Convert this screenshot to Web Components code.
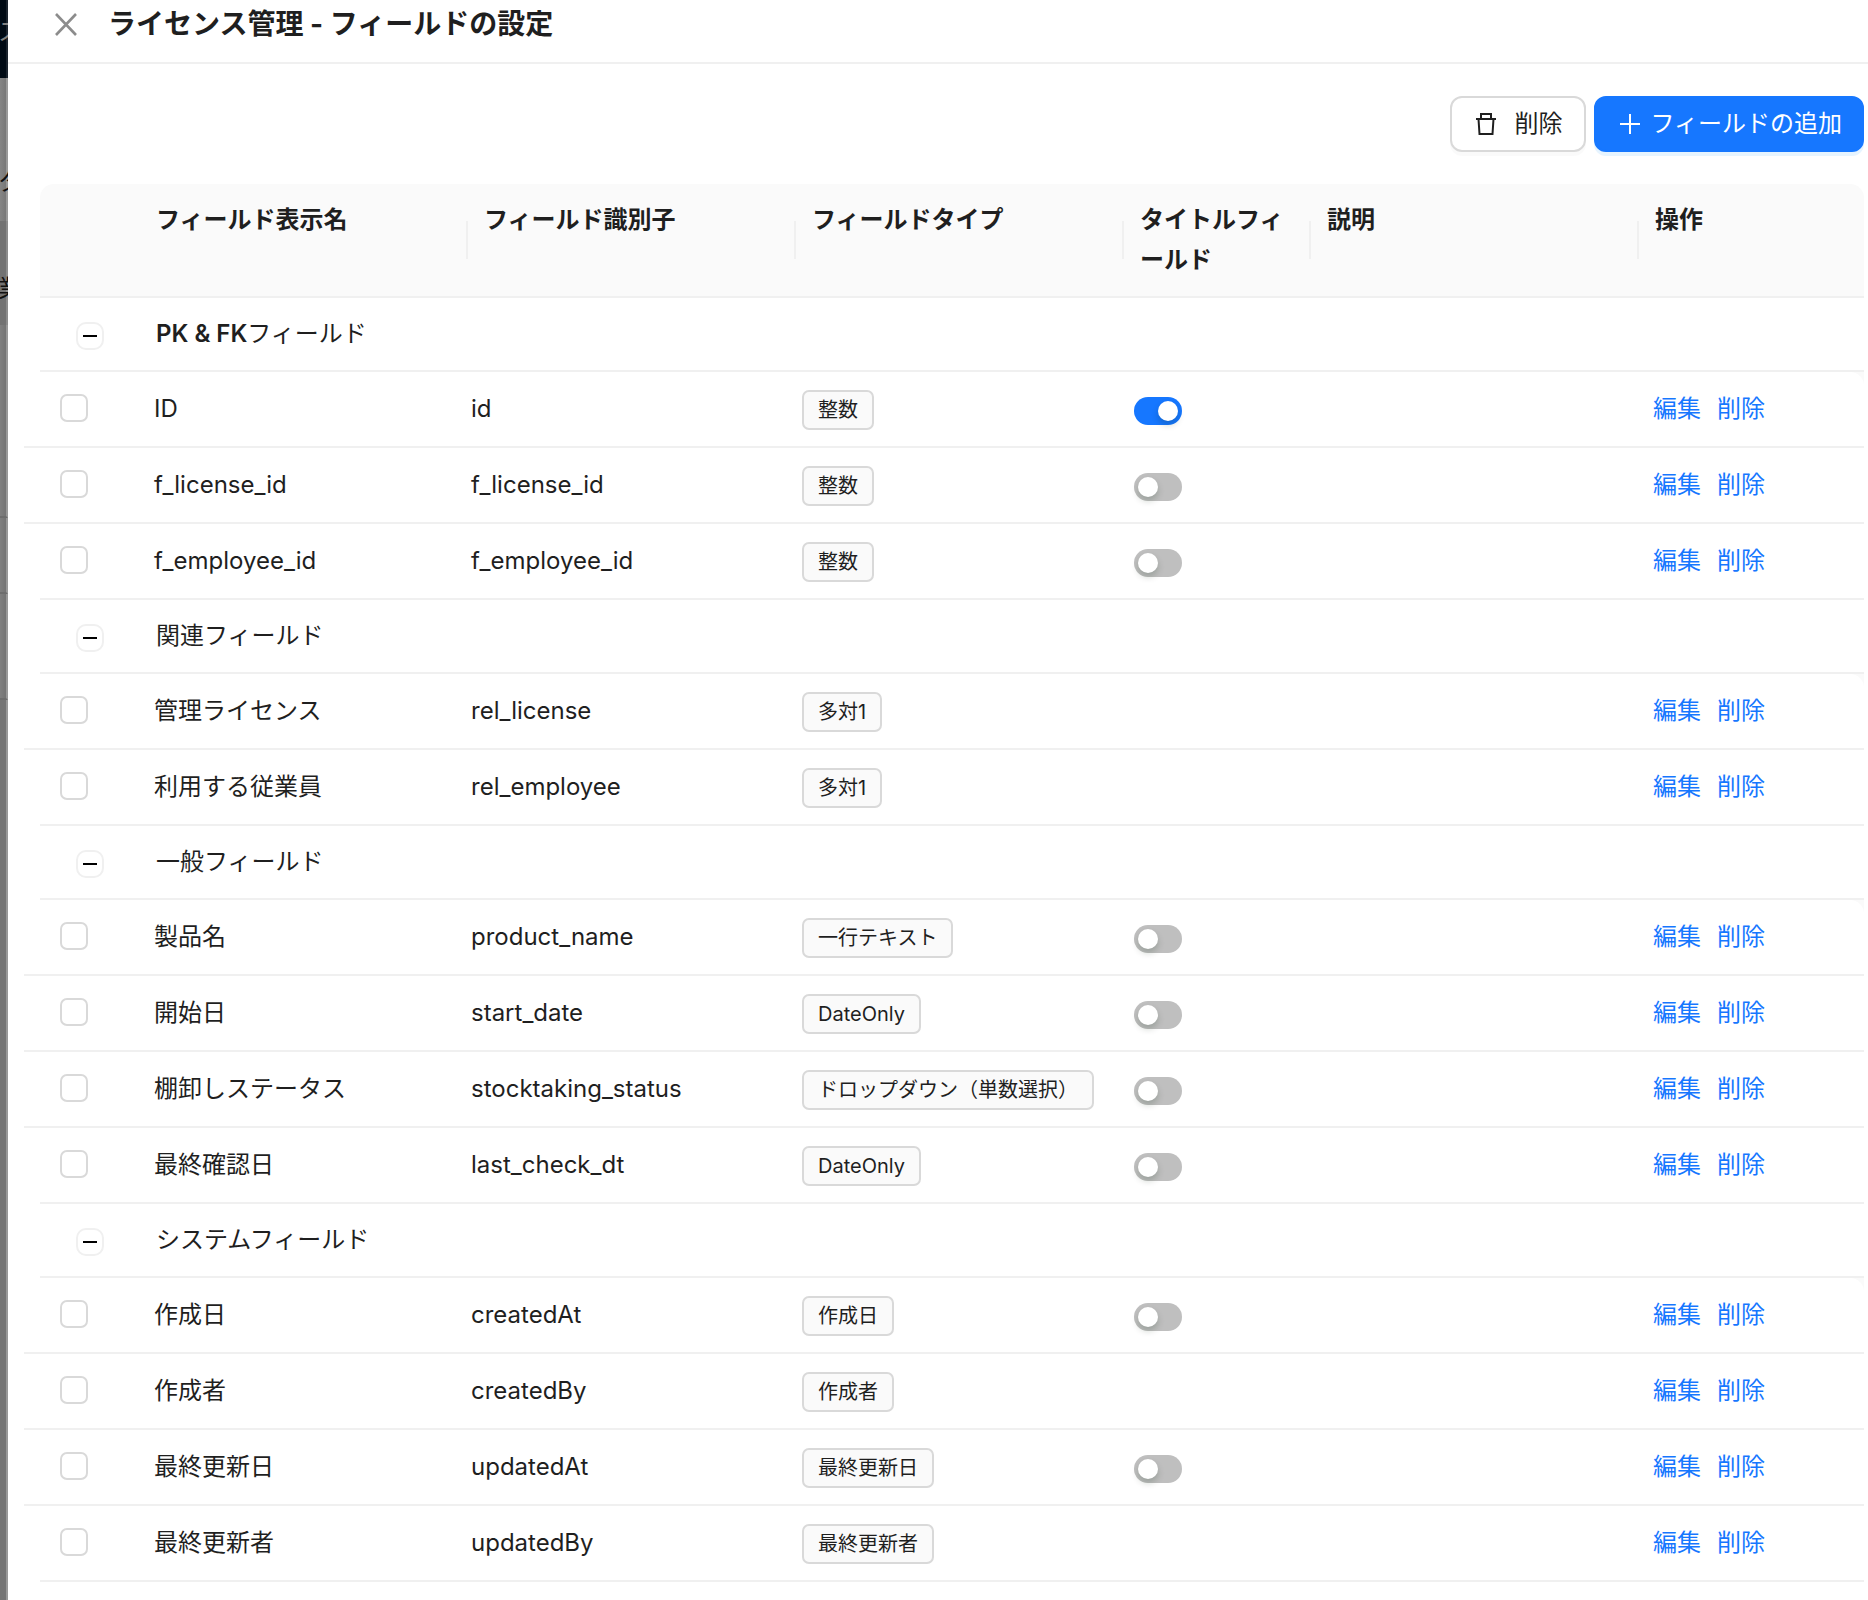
<!DOCTYPE html>
<html lang="ja">
<head>
<meta charset="utf-8">
<title>ライセンス管理 - フィールドの設定</title>
<style>
  html, body { height: 100%; }
  body {
    margin: 0;
    overflow: hidden;
    background: #808080;
    color: #1f1f1f;
    font-family: Inter, "Noto Sans CJK JP", sans-serif;
    font-size: 24px;
    line-height: 40px;
    --primary: #1677ff;
    --border: #d9d9d9;
    --split: #f0f0f0;
    --fill: #fafafa;
  }
</style>
</head>
<body>
<app-shell>
  <page-backdrop slot="page"></page-backdrop>
  <side-drawer>
    <span slot="title">ライセンス管理 - フィールドの設定</span>
    <ui-button slot="actions">
      <svg slot="icon" width="24" height="24" viewBox="0 0 24 24" fill="none" stroke="currentColor" stroke-width="2"><path d="M2 7h20M4.500 7l1 15h13l1-15M7 7V2h10V7"/></svg>
      削除</ui-button>
    <ui-button slot="actions" variant="primary">
      <svg slot="icon" width="24" height="24" viewBox="0 0 24 24" fill="none" stroke="currentColor" stroke-width="2"><path d="M12 2v20M2 12h20"/></svg>
      フィールドの追加</ui-button>
    <field-table></field-table>
  </side-drawer>
</app-shell>

<script>
const define = (name, html, setup) => {
  const template = document.createElement('template');
  template.innerHTML = html;
  customElements.define(name, class extends HTMLElement {
    constructor() {
      super();
      this.attachShadow({ mode: 'open' }).append(template.content.cloneNode(true));
    }
    connectedCallback() {
      if (setup && !this.ready) { this.ready = true; setup(this, this.shadowRoot); }
    }
  });
};

const groups = [
  { name: '<b>PK &amp; FK</b>フィールド', fields: [
    ['ID', 'id', '整数', 'on'],
    ['f_license_id', 'f_license_id', '整数', 'off'],
    ['f_employee_id', 'f_employee_id', '整数', 'off'] ] },
  { name: '関連フィールド', fields: [
    ['管理ライセンス', 'rel_license', '多対1', ''],
    ['利用する従業員', 'rel_employee', '多対1', ''] ] },
  { name: '一般フィールド', fields: [
    ['製品名', 'product_name', '一行テキスト', 'off'],
    ['開始日', 'start_date', 'DateOnly', 'off'],
    ['棚卸しステータス', 'stocktaking_status', 'ドロップダウン（単数選択）', 'off'],
    ['最終確認日', 'last_check_dt', 'DateOnly', 'off'] ] },
  { name: 'システムフィールド', fields: [
    ['作成日', 'createdAt', '作成日', 'off'],
    ['作成者', 'createdBy', '作成者', ''],
    ['最終更新日', 'updatedAt', '最終更新日', 'off'],
    ['最終更新者', 'updatedBy', '最終更新者', ''] ] }
];

define('app-shell', `
  <style>
    :host { display: grid; grid-template-columns: 8px minmax(0, 1fr); height: 100%; }
  </style>
  <slot name="page"></slot><slot></slot>`);

define('page-backdrop', `
  <style>
    :host { display: flex; flex-direction: column; overflow: hidden; white-space: nowrap; text-indent: -2px; }
    div { box-sizing: border-box; flex: none; border-right: 2px solid #999; }
    .nav { height: 78px; background: #000a14; border-color: #1a232d; color: #808080; line-height: 64px; }
    .tab { height: 143px; background: linear-gradient(90deg, #858585, #787878); color: #101010; padding-top: 84px; }
    .row { height: 104px; background: #727272; border-color: #8c8c8c; color: #101010; padding-top: 48px; }
    .cell { background: linear-gradient(90deg, #808080, #747474); border-bottom: 2px solid #6e6e6e; }
    .tall { height: 193px; }
    .short { height: 76px; }
    .last { height: 106px; }
    .rest { flex: 1; background: #757575; }
  </style>
  <div class="nav">ス</div>
  <div class="tab">タ</div>
  <div class="row">業</div>
  <div class="cell tall"></div>
  <div class="cell short"></div>
  <div class="cell last"></div>
  <div class="rest"></div>`);

define('side-drawer', `
  <style>
    :host { display: flex; flex-direction: column; background: #fff; min-width: 0; }
    header { display: flex; align-items: center; gap: 28px; height: 48px; padding: 0 44px 14px;
             border-bottom: 2px solid var(--split); }
    button { display: flex; padding: 0; border: 0; background: none; color: #8c8c8c; }
    h1 { margin: 0; font-size: 28px; line-height: 48px; font-weight: 700; }
    main { padding: 32px 4px 0 32px; }
    .actions { display: flex; justify-content: flex-end; gap: 8px; margin-bottom: 32px; }
  </style>
  <header>
    <button aria-label="閉じる"><svg width="28" height="28" viewBox="0 0 28 28" fill="none" stroke="currentColor" stroke-width="2.600"><path d="M4 4l20 21M24 4L4 25"/></svg></button>
    <h1><slot name="title"></slot></h1>
  </header>
  <main>
    <div class="actions"><slot name="actions"></slot></div>
    <slot></slot>
  </main>`);

define('ui-button', `
  <style>
    :host { display: block; }
    button { box-sizing: border-box; display: flex; align-items: center; gap: 16px; height: 56px;
             padding: 0 22px; border: 2px solid var(--border); border-radius: 12px; background: #fff;
             color: inherit; font: inherit; box-shadow: 0 4px 0 rgba(0,0,0,.02); }
    :host([variant="primary"]) button { gap: 8px; padding: 0 20px 0 22px; background: var(--primary);
             border-color: var(--primary); color: #fff; box-shadow: 0 4px 0 rgba(5,145,255,.1); }
    ::slotted(svg) { display: block; }
  </style>
  <button><slot name="icon"></slot><span><slot></slot></span></button>`);

define('ui-tag', `
  <style>
    :host { display: inline-block; vertical-align: top; box-sizing: border-box; height: 40px; padding: 0 14px;
            border: 2px solid var(--border); border-radius: 7px; background: var(--fill);
            font-size: 20px; line-height: 36px; white-space: nowrap; }
  </style>
  <slot></slot>`);

define('ui-checkbox', `
  <style>
    :host { display: block; }
    input { appearance: none; display: block; box-sizing: border-box; width: 28px; height: 28px; margin: 0;
            border: 2px solid var(--border); border-radius: 7px; background: #fff; }
    input:checked { background: var(--primary); border-color: var(--primary); }
  </style>
  <input type="checkbox">`, (host, root) => {
  root.querySelector('input').setAttribute('aria-label', host.getAttribute('label'));
});

define('ui-switch', `
  <style>
    :host { display: block; }
    input { appearance: none; display: flex; box-sizing: border-box; width: 48px; height: 28px; margin: 0; padding: 4px;
            border-radius: 14px; background: #bfbfbf; }
    input::before { content: ""; width: 20px; height: 20px; border-radius: 50%; background: #fff;
                    box-shadow: 0 4px 7px rgba(0,35,11,.2); }
    input:checked { background: var(--primary); justify-content: flex-end; }
  </style>
  <input type="checkbox" role="switch">`, (host, root) => {
  const input = root.querySelector('input');
  input.checked = host.hasAttribute('checked');
  input.setAttribute('aria-label', host.getAttribute('label'));
});

define('field-rows', `
  <style>
    :host { display: block; margin-left: -16px; background: var(--fill); }
    table { width: 100%; table-layout: fixed; border-collapse: separate; border-spacing: 0;
            background: #fff; border-top-right-radius: 14px; }
    td { box-sizing: border-box; height: 76px; padding: 0 16px; border-bottom: 2px solid var(--split); }
    tr:last-child td { height: 74px; border-bottom: 0; }
    td:first-child { padding-left: 36px; }
    td:first-child ui-checkbox { padding-bottom: 2px; }
    ui-tag { margin-top: 2px; }
    ui-switch { margin-top: 4px; }
    .ops { display: flex; gap: 16px; }
    a { color: var(--primary); text-decoration: none; }
  </style>
  <table>
    <colgroup><col style="width:114px"><col style="width:317px"><col style="width:331px"><col style="width:332px"><col style="width:190px"><col style="width:329px"><col style="width:227px"></colgroup>
    <tbody></tbody>
  </table>`, (host, root) => {
  root.querySelector('tbody').innerHTML = groups[host.getAttribute('group')].fields.map(([name, key, type, title]) => `
    <tr>
      <td><ui-checkbox label="${name}"></ui-checkbox></td>
      <td>${name}</td>
      <td>${key}</td>
      <td><ui-tag>${type}</ui-tag></td>
      <td>${title ? `<ui-switch label="${name}" ${title === 'on' ? 'checked' : ''}></ui-switch>` : ''}</td>
      <td></td>
      <td><div class="ops"><a href="#edit">編集</a><a href="#delete">削除</a></div></td>
    </tr>`).join('');
});

define('field-table', `
  <style>
    :host { display: block; }
    table { width: 100%; table-layout: fixed; border-collapse: separate; border-spacing: 0; }
    th { position: relative; padding: 16px; background: var(--fill); border-bottom: 2px solid var(--split);
         text-align: left; vertical-align: top; font-weight: 700; word-break: break-all; }
    th:first-child { border-top-left-radius: 14px; }
    th:last-child { border-top-right-radius: 14px; }
    th + th:not(:last-child)::after { content: ""; position: absolute; right: 0; top: 37px; width: 2px; height: 38px;
         background: var(--split); }
    .group td { padding: 16px; border-bottom: 2px solid var(--split); }
    .group td:first-child { padding-left: 36px; }
    .nested { padding: 0; border-bottom: 2px solid var(--split); }
    b { font-weight: 600; }
    button { box-sizing: border-box; display: flex; align-items: center; justify-content: center; width: 28px; height: 28px;
         margin-top: 4px; padding: 0; border: 2px solid var(--split); border-radius: 10px; background: #fff; }
    button::before { content: ""; width: 14px; height: 2px; background: #000; }
  </style>
  <table>
    <colgroup><col style="width:100px"><col style="width:328px"><col style="width:328px"><col style="width:328px"><col style="width:187px"><col style="width:328px"><col style="width:225px"></colgroup>
    <thead><tr><th></th><th>フィールド表示名</th><th>フィールド識別子</th><th>フィールドタイプ</th><th>タイトルフィールド</th><th>説明</th><th>操作</th></tr></thead>
    <tbody></tbody>
  </table>`, (host, root) => {
  root.querySelector('tbody').innerHTML = groups.map((group, i) => `
    <tr class="group"><td><button aria-label="折りたたむ" aria-expanded="true"></button></td><td colspan="6">${group.name}</td></tr>
    <tr><td class="nested" colspan="7"><field-rows group="${i}"></field-rows></td></tr>`).join('');
});
</script>
</body>
</html>
